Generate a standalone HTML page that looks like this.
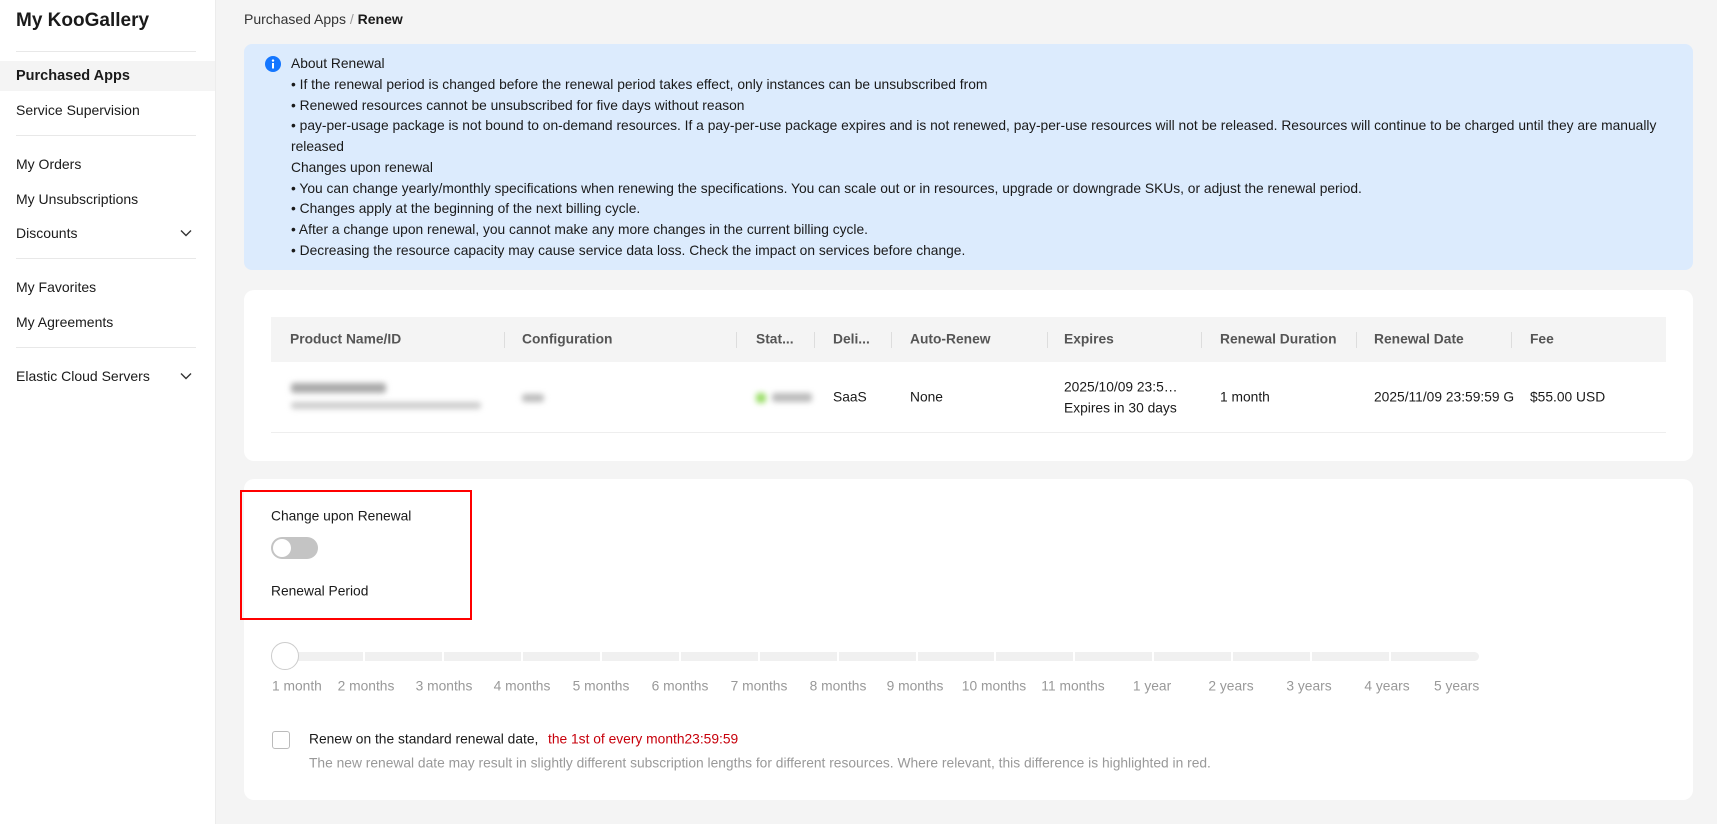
<!DOCTYPE html>
<html><head><meta charset="utf-8">
<style>
*{margin:0;padding:0;box-sizing:border-box}
body{width:1717px;height:824px;background:#f4f4f4;font-family:"Liberation Sans",sans-serif;font-size:13.8px;color:#1a1a1a;position:relative;overflow:hidden}
.a{position:absolute;white-space:nowrap}
.m{transform:translateY(-50%)}
#side{position:absolute;left:0;top:0;width:216px;height:824px;background:#fff;border-right:1px solid #ececec;font-size:14px}
.hr{position:absolute;left:16px;width:180px;height:1px;background:#e8e8e8}
.chev{position:absolute;left:180px;width:12px;height:8px}
.card{position:absolute;left:244px;width:1449px;background:#fff;border-radius:10px}
.th{font-weight:bold;color:#555}
.sep{position:absolute;top:332px;width:1px;height:16px;background:#ddd}
.seg{position:absolute;top:652px;height:9px;background:#f0f0f0}
.lb{position:absolute;top:686px;transform:translate(-50%,-50%);color:#999;white-space:nowrap}
.blur{position:absolute;background:#bbb;filter:blur(3px);border-radius:3px}
</style></head><body>
<div id="side">
<div class="a m" style="left:16px;top:21px;font-size:19px;font-weight:bold">My KooGallery</div>
<div class="hr" style="top:51px"></div>
<div style="position:absolute;left:0;top:61px;width:215px;height:30px;background:#f4f4f4"></div>
<div class="a m" style="left:16px;top:76px;font-weight:bold;font-size:14.5px">Purchased Apps</div>
<div class="a m" style="left:16px;top:110px">Service Supervision</div>
<div class="hr" style="top:135px"></div>
<div class="a m" style="left:16px;top:164px">My Orders</div>
<div class="a m" style="left:16px;top:199px">My Unsubscriptions</div>
<div class="a m" style="left:16px;top:233px">Discounts</div>
<svg class="chev" style="top:229px" viewBox="0 0 12 8"><path d="M1 1.5l5 5 5-5" fill="none" stroke="#333" stroke-width="1.4"/></svg>
<div class="hr" style="top:258px"></div>
<div class="a m" style="left:16px;top:287px">My Favorites</div>
<div class="a m" style="left:16px;top:322px">My Agreements</div>
<div class="hr" style="top:347px"></div>
<div class="a m" style="left:16px;top:376px">Elastic Cloud Servers</div>
<svg class="chev" style="top:372px" viewBox="0 0 12 8"><path d="M1 1.5l5 5 5-5" fill="none" stroke="#333" stroke-width="1.4"/></svg>
</div>

<div class="a m" style="left:244px;top:19px;color:#333;font-size:14px">Purchased Apps <span style="color:#999">/</span> <b style="color:#1a1a1a">Renew</b></div>

<div style="position:absolute;left:244px;top:44px;width:1449px;height:226px;background:#dcebfd;border-radius:8px"></div>
<svg class="a" style="left:265px;top:56px" width="16" height="16" viewBox="0 0 16 16"><circle cx="8" cy="8" r="8" fill="#1476ff"/><rect x="7" y="7" width="2" height="5.5" fill="#fff"/><circle cx="8" cy="4.6" r="1.2" fill="#fff"/></svg>
<div class="a" style="left:291px;top:54px;line-height:20.75px;color:#1a1a1a">
About Renewal<br>
• If the renewal period is changed before the renewal period takes effect, only instances can be unsubscribed from<br>
• Renewed resources cannot be unsubscribed for five days without reason<br>
• pay-per-usage package is not bound to on-demand resources. If a pay-per-use package expires and is not renewed, pay-per-use resources will not be released. Resources will continue to be charged until they are manually<br>
released<br>
Changes upon renewal<br>
• You can change yearly/monthly specifications when renewing the specifications. You can scale out or in resources, upgrade or downgrade SKUs, or adjust the renewal period.<br>
• Changes apply at the beginning of the next billing cycle.<br>
• After a change upon renewal, you cannot make any more changes in the current billing cycle.<br>
• Decreasing the resource capacity may cause service data loss. Check the impact on services before change.
</div>

<div class="card" style="top:290px;height:171px"></div>
<div style="position:absolute;left:271px;top:317px;width:1395px;height:45px;background:#f4f4f4"></div>
<div style="position:absolute;left:271px;top:432px;width:1395px;height:1px;background:#eee"></div>
<div class="a m th" style="left:290px;top:339px">Product Name/ID</div>
<div class="a m th" style="left:522px;top:339px">Configuration</div>
<div class="a m th" style="left:756px;top:339px">Stat...</div>
<div class="a m th" style="left:833px;top:339px">Deli...</div>
<div class="a m th" style="left:910px;top:339px">Auto-Renew</div>
<div class="a m th" style="left:1064px;top:339px">Expires</div>
<div class="a m th" style="left:1220px;top:339px">Renewal Duration</div>
<div class="a m th" style="left:1374px;top:339px">Renewal Date</div>
<div class="a m th" style="left:1530px;top:339px">Fee</div>
<div class="sep" style="left:504px"></div><div class="sep" style="left:736px"></div><div class="sep" style="left:814px"></div><div class="sep" style="left:891px"></div><div class="sep" style="left:1047px"></div><div class="sep" style="left:1201px"></div><div class="sep" style="left:1356px"></div><div class="sep" style="left:1511px"></div>
<div class="blur" style="left:291px;top:383px;width:95px;height:10px;background:#aaa"></div>
<div class="blur" style="left:291px;top:402px;width:190px;height:7px;background:#ccc"></div>
<div class="blur" style="left:522px;top:394px;width:22px;height:8px;background:#bbb"></div>
<div class="blur" style="left:756px;top:393px;width:10px;height:10px;background:#9d6"></div>
<div class="blur" style="left:772px;top:393px;width:40px;height:9px;background:#bbb"></div>
<div class="a m" style="left:833px;top:397px">SaaS</div>
<div class="a m" style="left:910px;top:397px">None</div>
<div class="a m" style="left:1064px;top:387px">2025/10/09 23:5…</div>
<div class="a m" style="left:1064px;top:408px">Expires in 30 days</div>
<div class="a m" style="left:1220px;top:397px">1 month</div>
<div class="a m" style="left:1374px;top:397px;width:140px;overflow:hidden">2025/11/09 23:59:59 GMT</div>
<div class="a m" style="left:1530px;top:397px">$55.00 USD</div>

<div class="card" style="top:479px;height:321px"></div>
<div style="position:absolute;left:240px;top:490px;width:232px;height:130px;border:2px solid #f00"></div>
<div class="a m" style="left:271px;top:516px">Change upon Renewal</div>
<div style="position:absolute;left:271px;top:537px;width:47px;height:22px;border-radius:11px;background:#c4c4c4"></div>
<div style="position:absolute;left:273px;top:539px;width:18px;height:18px;border-radius:50%;background:#fff"></div>
<div class="a m" style="left:271px;top:591px">Renewal Period</div>

<div class="seg" style="left:290px;width:73px"></div>
<div class="seg" style="left:365px;width:77px"></div>
<div class="seg" style="left:444px;width:77px"></div>
<div class="seg" style="left:523px;width:77px"></div>
<div class="seg" style="left:602px;width:77px"></div>
<div class="seg" style="left:681px;width:77px"></div>
<div class="seg" style="left:760px;width:77px"></div>
<div class="seg" style="left:839px;width:77px"></div>
<div class="seg" style="left:918px;width:76px"></div>
<div class="seg" style="left:996px;width:77px"></div>
<div class="seg" style="left:1075px;width:77px"></div>
<div class="seg" style="left:1154px;width:77px"></div>
<div class="seg" style="left:1233px;width:77px"></div>
<div class="seg" style="left:1312px;width:77px"></div>
<div class="seg" style="left:1391px;width:88px;border-radius:0 5px 5px 0"></div>
<div style="position:absolute;left:271px;top:642px;width:28px;height:28px;border-radius:50%;background:#fff;border:1.5px solid #ccc"></div>

<div class="a m" style="left:272px;top:686px;color:#999">1 month</div>
<div class="lb" style="left:366px">2 months</div>
<div class="lb" style="left:444px">3 months</div>
<div class="lb" style="left:522px">4 months</div>
<div class="lb" style="left:601px">5 months</div>
<div class="lb" style="left:680px">6 months</div>
<div class="lb" style="left:759px">7 months</div>
<div class="lb" style="left:838px">8 months</div>
<div class="lb" style="left:915px">9 months</div>
<div class="lb" style="left:994px">10 months</div>
<div class="lb" style="left:1073px">11 months</div>
<div class="lb" style="left:1152px">1 year</div>
<div class="lb" style="left:1231px">2 years</div>
<div class="lb" style="left:1309px">3 years</div>
<div class="lb" style="left:1387px">4 years</div>
<div class="a m" style="left:1434px;top:686px;color:#999">5 years</div>

<div style="position:absolute;left:272px;top:731px;width:18px;height:18px;border:1px solid #bbb;border-radius:3px;background:#fff"></div>
<div class="a m" style="left:309px;top:739px">Renew on the standard renewal date,</div>
<div class="a m" style="left:548px;top:739px;color:#c7000b">the 1st of every month23:59:59</div>
<div class="a m" style="left:309px;top:763px;color:#999">The new renewal date may result in slightly different subscription lengths for different resources. Where relevant, this difference is highlighted in red.</div>
</body></html>
